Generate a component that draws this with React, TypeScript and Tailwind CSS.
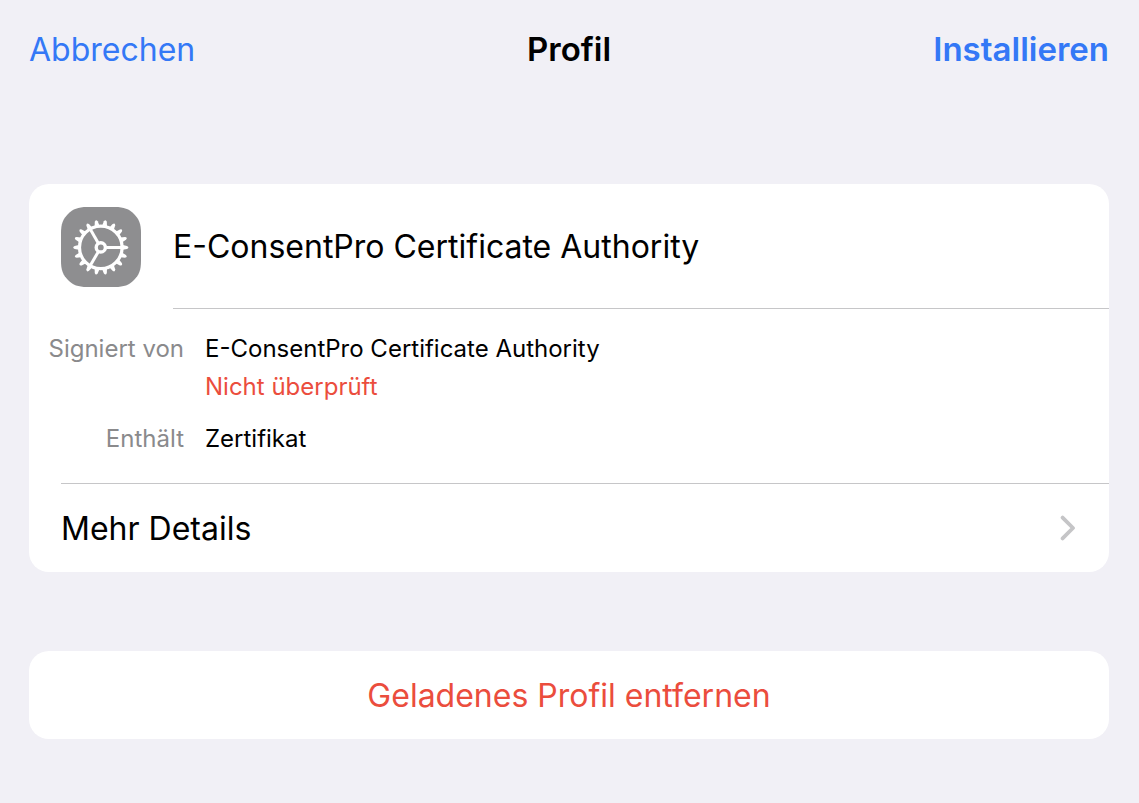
import React from 'react';

const TEETH = Array.from({ length: 18 }, (_, index) => index * 20);
const SPOKES = [0, 120, 240];

function SettingsIcon() {
  return (
    <svg viewBox="0 0 80 80" className="w-20 h-20 shrink-0" aria-hidden="true">
      <path
        d="M26 0h28c9 0 14 2 19 7s7 10 7 19v28c0 9-2 14-7 19s-10 7-19 7H26c-9 0-14-2-19-7s-7-10-7-19V26C0 17 2 12 7 7s10-7 19-7z"
        fill="#8e8e90"
      />
      <g transform="translate(39.8 40.4)" stroke="#fff" fill="none">
        <circle r="21.3" strokeWidth="3.2" />
        <circle r="4.6" strokeWidth="3.4" />
        {SPOKES.map((angle) => (
          <path key={angle} d="M5.5 0H21" strokeWidth="3" transform={`rotate(${angle})`} />
        ))}
        {TEETH.map((angle) => (
          <path
            key={angle}
            d="M22 -2.4L26.2 -1.5Q29 0 26.2 1.5L22 2.4z"
            fill="#fff"
            stroke="none"
            transform={`rotate(${angle})`}
          />
        ))}
      </g>
    </svg>
  );
}

function ChevronIcon() {
  return (
    <svg viewBox="0 0 16 26" className="w-4 h-[26px]" fill="none" aria-hidden="true">
      <path
        d="M2.6 2.6L13 13L2.6 23.4"
        stroke="#c5c5c7"
        strokeWidth="3.8"
        strokeLinecap="round"
        strokeLinejoin="round"
      />
    </svg>
  );
}

/**
 * Profile install sheet with certificate summary and actions
 */
export default function App() {
  return (
    <div className="min-h-screen bg-[#f1f0f6] pl-[29px] pr-[30px] pb-16 text-black font-['Inter','Liberation_Sans',sans-serif]">
      {/* Navigation bar */}
      <header className="grid grid-cols-3 items-baseline pt-[27px] text-[33px] leading-[44px]">
        <button type="button" className="justify-self-start text-[32px] text-[#3478f6]">
          Abbrechen
        </button>
        <h1 className="text-center font-semibold">Profil</h1>
        <button type="button" className="justify-self-end font-semibold text-[#3478f6]">
          Installieren
        </button>
      </header>

      <main className="mt-28 text-[32px] leading-[44px]">
        {/* Profile card */}
        <section className="overflow-hidden rounded-[20px] bg-white">
          <div className="flex items-stretch pl-8">
            <div className="flex h-[125px] items-center">
              <SettingsIcon />
            </div>
            <h2 className="ml-8 flex flex-1 items-center border-b border-[#c6c6c8] pt-0.5">
              E-ConsentPro Certificate Authority
            </h2>
          </div>

          <dl className="grid grid-cols-[155px_1fr] gap-x-[21px] gap-y-[14px] pt-[21px] pb-[25px] text-2xl leading-[38px]">
            <dt className="text-right text-[#8a8a8c]">Signiert von</dt>
            <dd>
              <p>E-ConsentPro Certificate Authority</p>
              <p className="text-[#eb4d3d]">Nicht überprüft</p>
            </dd>
            <dt className="text-right text-[#8a8a8c]">Enthält</dt>
            <dd>Zertifikat</dd>
          </dl>

          <div className="ml-8 border-t border-[#c6c6c8]">
            <button type="button" className="flex h-[88px] w-full items-center justify-between pr-[33px]">
              <span className="pt-0.5">Mehr Details</span>
              <ChevronIcon />
            </button>
          </div>
        </section>

        {/* Remove action */}
        <button
          type="button"
          className="mt-[79px] block h-[88px] w-full rounded-[20px] bg-white pt-0.5 text-center text-[#eb4d3d]"
        >
          Geladenes Profil entfernen
        </button>
      </main>
    </div>
  );
}
